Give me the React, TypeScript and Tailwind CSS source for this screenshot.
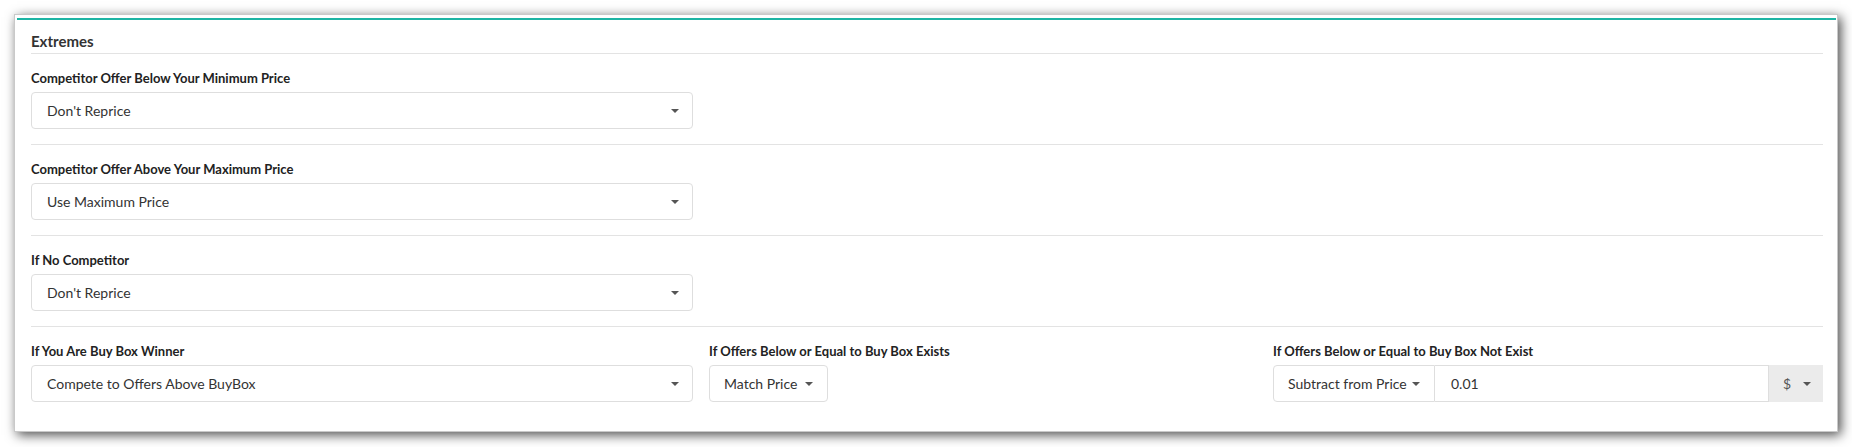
import React from "react";

const font = { fontFamily: "Lato, 'Open Sans', Arial, sans-serif" };

function Caret() {
  return (
    <span className="inline-block w-0 h-0 border-x-[4px] border-x-transparent border-t-[4px] border-t-[#555]" />
  );
}

function Select({ value }: { value: string }) {
  return (
    <div className="h-[37px] w-full border border-[#dedede] rounded-[4px] bg-white flex items-center justify-between pl-[15px] pr-[13px] text-[14px] text-[#333]">
      <span>{value}</span>
      <Caret />
    </div>
  );
}

function Label({ children }: { children: React.ReactNode }) {
  return <div className="text-[13px] font-bold leading-[18px] text-[#222] mb-[5px]">{children}</div>;
}

function Section({ label, value }: { label: string; value: string }) {
  return (
    <div className="pt-[15px] pb-[15px] border-b border-[#e3e3e3]">
      <Label>{label}</Label>
      <div className="w-[662px]">
        <Select value={value} />
      </div>
    </div>
  );
}

export default function App() {
  return (
    <div className="bg-white w-[1852px] h-[447px] pt-[14px] pl-[14px]" style={font}>
      <div className="w-[1824px] border border-[#c9c9c9] bg-white shadow-[3px_3px_11px_rgba(0,0,0,0.7)] pt-[3px] pl-[2px] pr-[1px]">
        <div className="border-t-2 border-[#1db4a4] pl-[14px] pr-[13px] pb-[29px]">
          <div className="pt-[12px] pb-[3px] border-b border-[#e3e3e3] text-[15px] font-bold leading-[18px] text-[#333]">
            Extremes
          </div>
          <Section label="Competitor Offer Below Your Minimum Price" value="Don't Reprice" />
          <Section label="Competitor Offer Above Your Maximum Price" value="Use Maximum Price" />
          <Section label="If No Competitor" value="Don't Reprice" />
          <div className="pt-[15px] grid grid-cols-[662px_548px_1fr] gap-x-[16px]">
            <div>
              <Label>If You Are Buy Box Winner</Label>
              <Select value="Compete to Offers Above BuyBox" />
            </div>
            <div>
              <Label>If Offers Below or Equal to Buy Box Exists</Label>
              <div className="h-[37px] w-[119px] flex items-center justify-between border border-[#dedede] rounded-[4px] bg-white pl-[14px] pr-[14px] text-[14px] text-[#333]">
                <span>Match Price</span>
                <Caret />
              </div>
            </div>
            <div>
              <Label>If Offers Below or Equal to Buy Box Not Exist</Label>
              <div className="h-[37px] flex text-[14px]">
                <div className="w-[162px] shrink-0 flex items-center justify-between border border-[#dedede] rounded-l-[4px] bg-white pl-[14px] pr-[14px] text-[#333]">
                  <span>Subtract from Price</span>
                  <Caret />
                </div>
                <div className="flex-1 flex items-center border-y border-r border-[#dedede] pl-[16px] text-[#333]">
                  0.01
                </div>
                <div className="w-[54px] shrink-0 flex items-center justify-between bg-[#ebebeb] pl-[14px] pr-[12px] text-[#555]">
                  <span>$</span>
                  <Caret />
                </div>
              </div>
            </div>
          </div>
        </div>
      </div>
    </div>
  );
}
